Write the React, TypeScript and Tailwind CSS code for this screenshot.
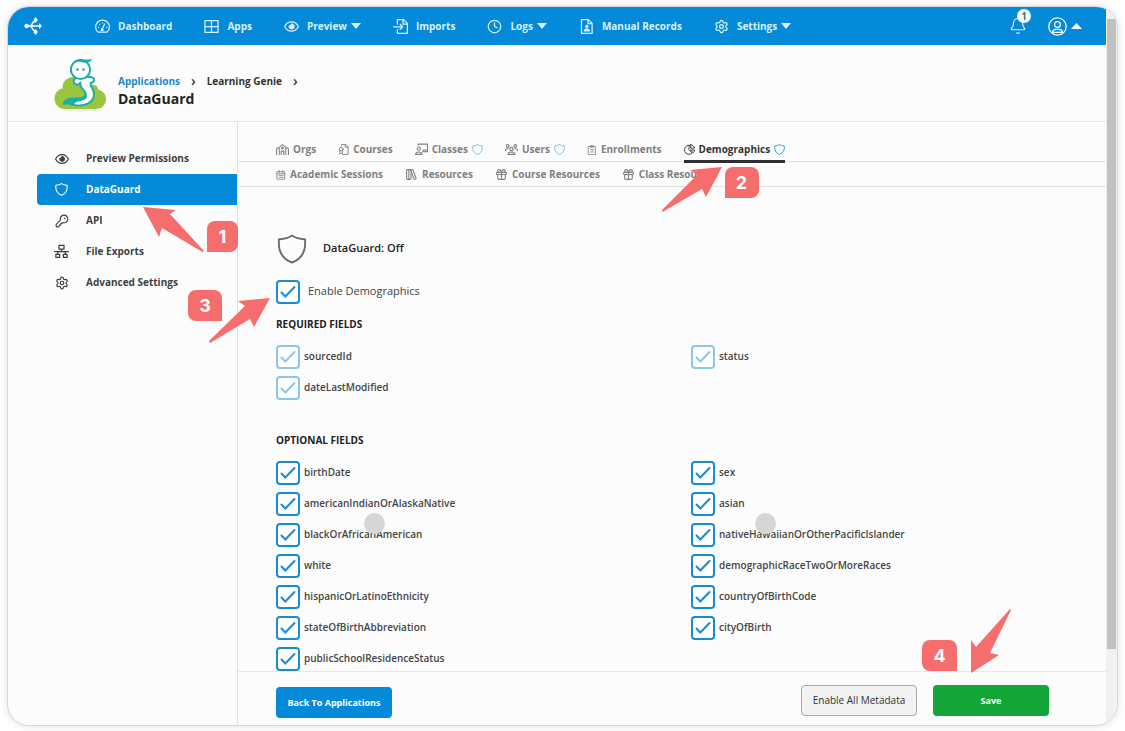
import type { ComponentType, ReactNode } from 'react'
import { Bell, Clock, Gift, KeyRound, LibraryBig, Settings } from 'lucide-react'

interface IconProps {
  className?: string
  strokeWidth?: number
}

type IconType = ComponentType<IconProps>

function Svg({ className, strokeWidth = 2, children }: IconProps & { children: ReactNode }) {
  return (
    <svg
      viewBox="0 0 24 24"
      className={className}
      fill="none"
      stroke="currentColor"
      strokeWidth={strokeWidth}
      strokeLinecap="round"
      strokeLinejoin="round"
      aria-hidden="true"
    >
      {children}
    </svg>
  )
}

const ShieldIcon: IconType = (props) => (
  <Svg {...props}>
    <path d="M12 1.2C9 3.4 5.4 4 1.6 4.2c-.8 8.3 1.6 15.4 10.4 18.6 8.8-3.2 11.2-10.3 10.4-18.6C18.6 4 15 3.4 12 1.2Z" />
  </Svg>
)

const GaugeIcon: IconType = (props) => (
  <Svg {...props}>
    <path d="M4.6 21A11 11 0 1 1 19.4 21Z" />
    <path d="m11.5 16 4-8M5.5 13.5h.1M7.5 8.5h.1M12 6.5h.1M18.5 13.5h.1" />
    <circle cx="11.5" cy="17" r="1.5" />
  </Svg>
)

const GridIcon: IconType = (props) => (
  <Svg {...props}>
    <path d="M1.5 2.5h21v19h-21ZM12 2.5v19M1.5 12h21" />
  </Svg>
)

const EyeIcon: IconType = (props) => (
  <Svg {...props}>
    <path d="M1 12c2.5-5 6.5-7.5 11-7.5S20.5 7 23 12c-2.5 5-6.5 7.5-11 7.5S3.5 17 1 12Z" />
    <path d="M12 8c-.2 2-1.500 3-3.700 3.200C7.500 16.500 15.800 17.300 16 12.200 16.200 9.500 14.300 8 12 8Z" fill="currentColor" />
  </Svg>
)

const ImportIcon: IconType = (props) => (
  <Svg {...props}>
    <path d="M7 8V1h10l6 6v16H7v-6M16 1v7h7M1 12.5h14M11.5 8.5l4 4-4 4" />
  </Svg>
)

const RecordIcon: IconType = (props) => (
  <Svg {...props}>
    <path d="M4 1h11l6 6v16H4ZM14.5 1v6.5H21" />
    <circle cx="12.5" cy="12" r="1.8" fill="currentColor" />
    <path d="M8.5 19c0-4 8-4 8 0Z" fill="currentColor" />
  </Svg>
)

const AccountIcon: IconType = (props) => (
  <Svg {...props}>
    <circle cx="12" cy="12" r="11" />
    <circle cx="12" cy="9.5" r="3.7" />
    <path d="M5.5 19.5c.5-3 2-3.8 4.5-3.8h4c2.5 0 4 .8 4.5 3.8Z" />
  </Svg>
)

const NetworkIcon: IconType = (props) => (
  <Svg {...props}>
    <path d="M8 2h8v6H8ZM3 16.5h6v5H3ZM15 16.5h6v5h-6ZM1 12.2h22M12 8v4M6 12.5v4M18 12.5v4" />
  </Svg>
)

const SchoolIcon: IconType = (props) => (
  <Svg {...props}>
    <path d="M6 21V8l6-5 6 5v13M6 9H4c-2 0-3 1-3 3v9M18 9h2c2 0 3 1 3 3v9M9.5 21v-6h5v6" />
    <circle cx="12" cy="9.5" r="1.5" />
  </Svg>
)

const CertificateIcon: IconType = (props) => (
  <Svg {...props}>
    <path d="M8 4V1h9l5 5v17H11M16 1v6h6M4 15v7l3-2 3 2v-7" />
    <circle cx="7" cy="11" r="4" />
  </Svg>
)

const TeacherIcon: IconType = (props) => (
  <Svg {...props}>
    <path d="M6 4V2h17v14h-9M15 16v-3h5v3M1 21c0-6 12-6 12 0Z" />
    <circle cx="7" cy="10.5" r="3" />
  </Svg>
)

const GroupIcon: IconType = (props) => (
  <Svg {...props}>
    <circle cx="12" cy="11" r="3" />
    <circle cx="5" cy="5.5" r="2.5" />
    <circle cx="19" cy="5.5" r="2.5" />
    <path d="M5.5 21c0-6 13-6 13 0ZM1 14c0-3 2-3.5 5-3.5M23 14c0-3-2-3.5-5-3.5" />
  </Svg>
)

const ClipboardIcon: IconType = (props) => (
  <Svg {...props}>
    <path d="M4 3.5h16V23H4ZM9 1.5h6v4H9ZM8.5 11h7M8.5 16.5h7" />
  </Svg>
)

const PieIcon: IconType = (props) => (
  <Svg {...props}>
    <path d="M11 2.5A10 10 0 1 0 18 19.5L11 12.5ZM14.5 1.5V9h8c-.5-4-3.5-7-8-7.5ZM15 13h8c0 2-1 4-2.5 5.5Z" />
  </Svg>
)

const PlannerIcon: IconType = (props) => (
  <Svg {...props}>
    <path d="M3 4h18v18H3ZM8 1v5M16 1v5M3 9h18M7 13h10M7 17.5h10" />
  </Svg>
)

const HubIcon: IconType = (props) => (
  <Svg {...props}>
    <path d="M4 12h17M8 12c4 0 2-6.5 7-6.5M8 12c4 0 2 6.5 7 6.5" />
    <g fill="currentColor" stroke="none">
      <circle cx="3.5" cy="12" r="3" />
      <path d="m20 8 4 4-4 4ZM12.5 4 15.5 0l3 4-3 4ZM12.5 20l3 4 3-4-3-4Z" />
    </g>
  </Svg>
)

function Caret({ up = false }: { up?: boolean }) {
  return (
    <svg viewBox="0 0 10 6" className={up ? 'h-[6px] w-[11px]' : 'h-[6px] w-[10px]'} fill="currentColor" preserveAspectRatio="none" aria-hidden="true">
      {up ? <path d="M0 6 5 0l5 6Z" /> : <path d="M0 0h10L5 6Z" />}
    </svg>
  )
}

function GenieLogo() {
  return (
    <svg viewBox="0 0 52 54" className="h-[54px] w-[52px] shrink-0" role="img" aria-label="Learning Genie">
      <ellipse cx="26" cy="52" rx="20" ry="1.5" fill="#ededed" />
      <path d="M11 51C5 51 .5 46.5.5 40.5c0-5 3-9 8-10C8 24 13 19 19 19h9c5 0 8 3 9 8 5-1 7 2 7.500 5 4.500.5 7.500 4.500 7.500 9 0 6-4.500 10-10 10Z" fill="#9bc53d" />
      <path
        d="M22 20c-3 1-3 5 0 6.500 2 .5 3.500-.5 4.500-2C25.500 29 29 31 31 34c2 4-2 6.500-8 6.500-6 0-13 0-13 5.500 2-2 7 0 10 1 10 2 20-2 20-11 0-5-4-7-3.500-11 2 0 4-2 3.500-4-1-3-4-2-6-2Z"
        fill="#fff"
        stroke="#1cafa9"
        strokeWidth="2"
        strokeLinejoin="round"
      />
      <path d="M9.500 46c0-6 7-6 13.500-6 6 0 10-2 8-6 4 5 2 8-6 9.500-4 .7-6 2.500-4 4.500-5-1-9-3-11.500-2Z" fill="#1cafa9" />
      <circle cx="26.5" cy="11.5" r="9.6" fill="#fff" stroke="#1cafa9" strokeWidth="2" />
      <path d="M21 3c4-2.500 11-1 17-2-1 3-5 4-9 3.500Z" fill="#1cafa9" />
      <circle cx="23.5" cy="11.5" r="1.3" fill="#1cafa9" />
      <circle cx="29.5" cy="11.5" r="1.3" fill="#1cafa9" />
    </svg>
  )
}

function Badge({ n, className }: { n: number; className: string }) {
  return (
    <span className={`flex h-[31px] shrink-0 items-center justify-center bg-[#f66d6d] font-['Inter',sans-serif] text-lg leading-none font-bold text-white ${className}`}>
      {n}
    </span>
  )
}

const navItems: { label: string; icon: IconType; menu?: boolean }[] = [
  { label: 'Dashboard', icon: GaugeIcon },
  { label: 'Apps', icon: GridIcon },
  { label: 'Preview', icon: EyeIcon, menu: true },
  { label: 'Imports', icon: ImportIcon },
  { label: 'Logs', icon: Clock, menu: true },
  { label: 'Manual Records', icon: RecordIcon },
  { label: 'Settings', icon: Settings, menu: true },
]

const sideItems: { label: string; icon: IconType; iconClass: string }[] = [
  { label: 'Preview Permissions', icon: EyeIcon, iconClass: 'size-[14px]' },
  { label: 'DataGuard', icon: ShieldIcon, iconClass: 'size-[13px]' },
  { label: 'API', icon: KeyRound, iconClass: 'size-[14px]' },
  { label: 'File Exports', icon: NetworkIcon, iconClass: 'size-[15px]' },
  { label: 'Advanced Settings', icon: Settings, iconClass: 'size-[14px]' },
]

interface Tab {
  label: string
  icon: IconType
  iconClass: string
  guarded?: boolean
  active?: boolean
}

const mainTabs: Tab[] = [
  { label: 'Orgs', icon: SchoolIcon, iconClass: 'size-[13px]' },
  { label: 'Courses', icon: CertificateIcon, iconClass: 'size-[11px]' },
  { label: 'Classes', icon: TeacherIcon, iconClass: 'size-[13px]', guarded: true },
  { label: 'Users', icon: GroupIcon, iconClass: 'size-[13px]', guarded: true },
  { label: 'Enrollments', icon: ClipboardIcon, iconClass: 'size-[10px]' },
  { label: 'Demographics', icon: PieIcon, iconClass: 'size-[11px]', guarded: true, active: true },
]

const resourceTabs: Tab[] = [
  { label: 'Academic Sessions', icon: PlannerIcon, iconClass: 'size-[10px]' },
  { label: 'Resources', icon: LibraryBig, iconClass: 'size-[13px]' },
  { label: 'Course Resources', icon: Gift, iconClass: 'size-[13px]' },
  { label: 'Class Resources', icon: Gift, iconClass: 'size-[13px]' },
]

const requiredFields = ['sourcedId', 'status', 'dateLastModified']

const optionalFields = [
  'birthDate',
  'sex',
  'americanIndianOrAlaskaNative',
  'asian',
  'blackOrAfricanAmerican',
  'nativeHawaiianOrOtherPacificIslander',
  'white',
  'demographicRaceTwoOrMoreRaces',
  'hispanicOrLatinoEthnicity',
  'countryOfBirthCode',
  'stateOfBirthAbbreviation',
  'cityOfBirth',
  'publicSchoolResidenceStatus',
]

function TopNav() {
  return (
    <header className="flex h-[38px] items-center bg-[#048ad9] pr-6 pl-4 text-[#d8f1fd]">
      <a href="#" aria-label="Home" className="mr-[53px] text-white">
        <HubIcon className="size-[18px]" />
      </a>
      <nav className="flex flex-1 items-center gap-8">
        {navItems.map(({ label, icon: Icon, menu }) => (
          <a key={label} href="#" className="flex items-center gap-2 text-[10px] font-bold whitespace-nowrap">
            <Icon className="size-[15px]" strokeWidth={2} />
            {menu ? (
              <span className="flex items-center gap-1">
                {label}
                <Caret />
              </span>
            ) : (
              label
            )}
          </a>
        ))}
      </nav>
      <button className="relative mr-[21px]" aria-label="Notifications, 1 unread">
        <Bell className="size-[18px]" strokeWidth={1.6} />
        <span className="absolute -top-2 left-2 flex size-[14px] items-center justify-center rounded-full bg-white text-[10px] font-bold text-[#2779a8]">
          1
        </span>
      </button>
      <button className="flex items-center gap-1 text-white" aria-label="Account">
        <AccountIcon className="size-[19px]" strokeWidth={1.6} />
        <Caret up />
      </button>
    </header>
  )
}

function Sidebar() {
  return (
    <aside className="w-[230px] shrink-0 border-r border-[#e2e2e2] pt-[21px]">
      <ul>
        {sideItems.map(({ label, icon: Icon, iconClass }) => {
          const active = label === 'DataGuard'
          return (
            <li key={label} className="relative ml-[29px]">
              <a
                href="#"
                className={`flex h-[31px] items-center gap-[17px] pl-[17px] text-[10px] font-bold ${
                  active ? 'rounded-l bg-[#048ad9] text-white' : 'text-[#3f3f3f]'
                }`}
              >
                <span className="flex w-[15px] justify-center">
                  <Icon className={iconClass} strokeWidth={2} />
                </span>
                {label}
              </a>
              {active && (
                <div className="pointer-events-none absolute top-8 left-[106px] z-20 flex items-end gap-0.5">
                  <svg viewBox="0 0 62 46" className="h-[46px] w-[62px]" fill="#f66d6d" aria-hidden="true">
                    <path d="M0 1 33 4l-6 4 34 37-1.5 1L19 22l-3 9Z" />
                  </svg>
                  <Badge n={1} className="w-[31px] rounded-lg rounded-bl-none" />
                </div>
              )}
            </li>
          )
        })}
      </ul>
    </aside>
  )
}

function TabRow({ tabs }: { tabs: Tab[] }) {
  return (
    <nav className="flex h-[25px] gap-[22px] border-b border-[#e2e2e2] pl-[38px]">
      {tabs.map(({ label, icon: Icon, iconClass, guarded, active }) => (
        <div key={label} className="relative flex">
          <a
            href="#"
            className={`flex h-[26px] items-center gap-1 border-b-[3px] pt-0.5 text-[10px] font-bold whitespace-nowrap ${
              active ? 'border-[#2d2f33] text-[#333]' : 'border-transparent text-[#808080]'
            }`}
          >
            <Icon className={iconClass} strokeWidth={2} />
            {label}
            {guarded && (
              <ShieldIcon className={active ? 'size-[11px] text-[#2499cc]' : 'size-[11px] text-[#77bde7]'} strokeWidth={2} />
            )}
          </a>
          {active && (
            <div className="pointer-events-none absolute top-[30px] -left-[22px] z-20 flex items-start gap-[3px]">
              <svg viewBox="0 0 60 45" className="h-[45px] w-[60px]" fill="#f66d6d" aria-hidden="true">
                <path d="M60 0 28 3l7 5L0 43l.5 2L40 22l4 8Z" />
              </svg>
              <Badge n={2} className="w-[34px] rounded-lg rounded-bl-none" />
            </div>
          )}
        </div>
      ))}
    </nav>
  )
}

function CheckField({ label, disabled = false, large = false }: { label: string; disabled?: boolean; large?: boolean }) {
  return (
    <label className={`flex h-[25px] items-center text-[#454545] ${large ? 'gap-2 text-[11px] font-medium' : 'gap-1 text-[10px] font-semibold'}`}>
      <span className="grid size-6 shrink-0">
        <input
          type="checkbox"
          defaultChecked
          disabled={disabled}
          className={`peer col-start-1 row-start-1 size-6 appearance-none rounded border-2 bg-white ${
            disabled ? 'border-[#8bc8e8]' : 'border-[#1a8bd0]'
          }`}
        />
        <svg
          viewBox="0 0 24 24"
          className={`pointer-events-none invisible col-start-1 row-start-1 size-6 peer-checked:visible ${
            disabled ? 'text-[#8bc8e8]' : 'text-[#1a8bd0]'
          }`}
          fill="none"
          stroke="currentColor"
          strokeWidth="2"
          strokeLinecap="round"
          aria-hidden="true"
        >
          <path d="m5.5 12.5 3.8 4L18.5 7" />
        </svg>
      </span>
      {label}
    </label>
  )
}

export default function App() {
  return (
    <div className="min-h-screen bg-white px-[7px] pt-[6px] pb-[5px] font-['Open_Sans',sans-serif]">
      <div className="flex overflow-hidden rounded-[22px] border border-[#d5d8e3] bg-[#fcfcfc] shadow-[0_0_8px_rgba(0,0,0,0.12)]">
        <div className="min-w-0 flex-1">
          <TopNav />
          <div className="flex h-[77px] items-center gap-3 border-b border-[#e5e5e5] pt-1 pl-[46px]">
            <GenieLogo />
            <div className="pt-3">
              <nav className="flex items-center gap-[11px] text-[10px] leading-4 font-bold text-[#333]">
                <a href="#" className="text-[#1d88cc]">Applications</a>
                <span className="text-sm leading-4 font-semibold">›</span>
                <a href="#">Learning Genie</a>
                <span className="text-sm leading-4 font-semibold">›</span>
              </nav>
              <h1 className="text-sm leading-5 font-bold text-[#222]">DataGuard</h1>
            </div>
          </div>

          <div className="flex">
            <Sidebar />
            <main className="min-w-0 flex-1">
              <div className="pt-[15px]">
                <TabRow tabs={mainTabs} />
                <TabRow tabs={resourceTabs} />
              </div>

              <form>
                <div className="pt-[46px] pl-[38px]">
                  <div className="flex h-[31px] items-center gap-4 pl-px text-[11px] font-semibold text-[#222]">
                    <ShieldIcon className="size-[30px] text-[#6b6b6b]" strokeWidth={1.5} />
                    DataGuard: Off
                  </div>
                  <div className="relative mt-[15px]">
                    <CheckField label="Enable Demographics" large />
                    <div className="pointer-events-none absolute top-[11px] -left-[88px] z-20 flex items-start">
                      <Badge n={3} className="w-[34px] rounded-lg rounded-br-none" />
                      <svg viewBox="0 0 61 45" className="mt-2 -ml-[13px] h-[45px] w-[61px]" fill="#f66d6d" aria-hidden="true">
                        <path d="M61 0 29 3l7 5L0 43l1 2L41 21l4 8Z" />
                      </svg>
                    </div>
                  </div>

                  <h2 className="mt-3 text-[10px] leading-4 font-bold text-[#222]">REQUIRED FIELDS</h2>
                  <div className="mt-3 grid grid-cols-2 gap-y-1.5">
                    {requiredFields.map((field) => (
                      <CheckField key={field} label={field} disabled />
                    ))}
                  </div>

                  <h2 className="mt-8 text-[10px] leading-4 font-bold text-[#222]">OPTIONAL FIELDS</h2>
                  <div className="relative mt-3 grid grid-cols-2 gap-y-1.5">
                    {optionalFields.map((field) => (
                      <CheckField key={field} label={field} />
                    ))}
                    <span className="absolute top-[53px] left-[88px] size-[21px] rounded-full bg-[#d6d6d6]" />
                    <span className="absolute top-[53px] left-1/2 ml-16 size-[21px] rounded-full bg-[#d6d6d6]" />
                  </div>
                </div>

                <footer className="flex h-[54px] items-center gap-4 border-t border-[#e8e8e8] pr-[57px] pl-[38px]">
                  <button type="button" className="mt-2 mr-auto h-[31px] w-[116px] rounded bg-[#048ad9] text-[9px] font-bold text-white">
                    Back To Applications
                  </button>
                  <button type="button" className="mt-1 h-[31px] w-[116px] rounded border border-[#a8a8a8] bg-[#f2f2f2] text-[10px] font-medium text-[#333]">
                    Enable All Metadata
                  </button>
                  <div className="relative mt-1">
                    <button type="submit" className="h-[31px] w-[116px] rounded bg-[#13a538] text-[9px] font-bold text-white">
                      Save
                    </button>
                    <div className="pointer-events-none absolute bottom-[43px] -left-[11px] z-20 flex items-end gap-[14px]">
                      <Badge n={4} className="mb-0.5 w-[35px] rounded-lg rounded-br-none" />
                      <svg viewBox="0 0 40 64" className="h-16 w-10" fill="#f66d6d" aria-hidden="true">
                        <path d="M0 64V31l5 7L39 0l1 1-21 43 9 2Z" />
                      </svg>
                    </div>
                  </div>
                </footer>
              </form>
            </main>
          </div>
        </div>

        <div className="flex w-[11px] shrink-0 flex-col bg-[#f1f1f1] px-px pt-3 pb-[76px]" aria-hidden="true">
          <div className="flex-1 bg-[#c1c1c1]" />
        </div>
      </div>
    </div>
  )
}
